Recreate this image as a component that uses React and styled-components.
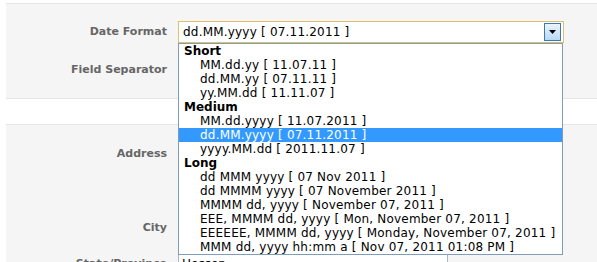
import React, { useState } from "react";
import styled, { createGlobalStyle } from "styled-components";

const GlobalStyle = createGlobalStyle`
html, body {
  margin: 0;
  padding: 0;
  overflow: hidden;
  background: #fff;
  font-family: "DejaVu Sans", Verdana, sans-serif;
}
`;

const formatGroups = [
  {
    name: "Short",
    options: ["MM.dd.yy [ 11.07.11 ]", "dd.MM.yy [ 07.11.11 ]", "yy.MM.dd [ 11.11.07 ]"],
  },
  {
    name: "Medium",
    options: ["MM.dd.yyyy [ 11.07.2011 ]", "dd.MM.yyyy [ 07.11.2011 ]", "yyyy.MM.dd [ 2011.11.07 ]"],
  },
  {
    name: "Long",
    options: [
      "dd MMM yyyy [ 07 Nov 2011 ]",
      "dd MMMM yyyy [ 07 November 2011 ]",
      "MMMM dd, yyyy [ November 07, 2011 ]",
      "EEE, MMMM dd, yyyy [ Mon, November 07, 2011 ]",
      "EEEEEE, MMMM dd, yyyy [ Monday, November 07, 2011 ]",
      "MMM dd, yyyy hh:mm a [ Nov 07, 2011 01:08 PM ]",
    ],
  },
];

const DateSelect = () => {
  const [selected, setSelected] = useState("dd.MM.yyyy [ 07.11.2011 ]");
  return (
    <SelectBox>
      <SelectValue>{selected}</SelectValue>
      <ArrowButton>
        <svg width="7" height="4" viewBox="0 0 7 4">
          <path d="M0 0h7L3.5 4z" fill="#000" />
        </svg>
      </ArrowButton>
      <DropList>
        {formatGroups.map((group) => (
          <React.Fragment key={group.name}>
            <GroupLabel>{group.name}</GroupLabel>
            {group.options.map((opt) => (
              <Option key={opt} $active={opt === selected} onClick={() => setSelected(opt)}>
                {opt}
              </Option>
            ))}
          </React.Fragment>
        ))}
      </DropList>
    </SelectBox>
  );
};

export default function App() {
  return (
    <Page>
      <GlobalStyle />
      <Section>
        <Row>
          <Label>Date Format</Label>
          <DateSelect />
        </Row>
        <Row>
          <Label>Field Separator</Label>
          <TextInput $width={60} defaultValue="." />
        </Row>
      </Section>
      <Spacer />
      <Section>
        <Row $top>
          <Label $top>Address</Label>
          <TextArea defaultValue="" />
        </Row>
        <Row>
          <Label>City</Label>
          <TextInput $width={270} defaultValue="" />
        </Row>
        <Row>
          <Label>State/Province</Label>
          <TextInput $width={270} defaultValue="Hessen" />
        </Row>
      </Section>
    </Page>
  );
}

const Page = styled.div`
  padding: 3px 0 0 6px;
`;

const Section = styled.div`
  background: #f5f5f5;
  border-top: 1px solid #e6e6e6;
  border-bottom: 1px solid #e6e6e6;
  padding: 17px 0 17px;
  display: flex;
  flex-direction: column;
  gap: 16px;
  & + div + & {
    padding-top: 11px;
    gap: 14px;
  }
`;

const Spacer = styled.div`
  height: 25px;
`;

const Row = styled.div`
  display: grid;
  grid-template-columns: 161px auto;
  column-gap: 11px;
  align-items: ${(p) => (p.$top ? "start" : "center")};
`;

const Label = styled.div`
  text-align: right;
  font-size: 11px;
  font-weight: bold;
  line-height: 14px;
  color: #666;
  padding-top: ${(p) => (p.$top ? "11px" : "0")};
`;

const TextInput = styled.input`
  box-sizing: border-box;
  width: ${(p) => p.$width}px;
  height: 22px;
  border: 1px solid #a9b8c6;
  background: #fff;
  padding: 0 3px;
  font-family: "DejaVu Sans", Verdana, sans-serif;
  font-size: 12px;
  color: #000;
`;

const TextArea = styled.textarea`
  box-sizing: border-box;
  width: 270px;
  height: 67px;
  border: 1px solid #a9b8c6;
  resize: none;
  font-family: "DejaVu Sans", Verdana, sans-serif;
`;

const SelectBox = styled.div`
  position: relative;
  box-sizing: border-box;
  width: 386px;
  height: 22px;
  border: 1px solid #e2c06a;
  background: #fff;
  display: flex;
  align-items: center;
  font-size: 12px;
  letter-spacing: 0.2px;
`;

const SelectValue = styled.span`
  padding-left: 4px;
  color: #000;
  flex: 1;
`;

const ArrowButton = styled.div`
  box-sizing: border-box;
  width: 17px;
  height: 18px;
  margin-right: 2px;
  border: 1px solid #3c7bb0;
  background: linear-gradient(#eaf4fd, #b8d8f4);
  display: flex;
  align-items: center;
  justify-content: center;
`;

const DropList = styled.div`
  position: absolute;
  top: 21px;
  left: -1px;
  width: 385px;
  box-sizing: border-box;
  border: 1px solid #7f9db9;
  background: #fff;
  z-index: 10;
`;

const GroupLabel = styled.div`
  font-weight: bold;
  line-height: 14px;
  padding-left: 5px;
  color: #000;
  letter-spacing: 0;
`;

const Option = styled.div`
  line-height: 14px;
  padding-left: 21px;
  white-space: nowrap;
  color: ${(p) => (p.$active ? "#fff" : "#000")};
  background: ${(p) => (p.$active ? "#3399ff" : "transparent")};
  cursor: default;
`;
